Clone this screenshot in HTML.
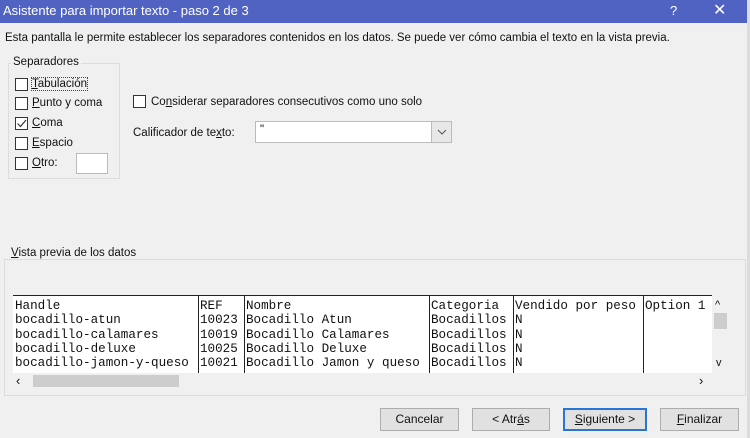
<!DOCTYPE html>
<html><head><meta charset="utf-8"><style>
*{margin:0;padding:0;box-sizing:border-box}
body{width:750px;height:438px;background:#f0f0f0;font-family:"Liberation Sans",sans-serif;font-size:11.5px;color:#111;position:relative;overflow:hidden}
.a{position:absolute;white-space:nowrap}
.title{left:0;top:0;width:747px;height:23px;background:#5063c2;color:#fff;font-size:13px;line-height:22px;padding-left:3px}
.cb{position:absolute;width:13px;height:13px;border:1px solid #333;background:#fff}
.grp{position:absolute;border:1px solid #dcdcdc}
.btn{position:absolute;top:408px;height:23px;border:1px solid #adadad;background:#e1e1e1;text-align:center;line-height:21px;font-size:12px}
.mono{font-family:"Liberation Mono",monospace;font-size:12.6px;line-height:14.3px}
.col{position:absolute;top:0;height:78px;border-left:1px solid #222;padding-left:1px;padding-top:3px}
u{text-decoration:underline}
</style></head><body>
<div class="a title">Asistente para importar texto - paso 2 de 3<span style="position:absolute;left:670px;font-size:13px">?</span><span style="position:absolute;left:713px;font-size:16px">✕</span></div>
<div class="a" style="left:747px;top:0;width:3px;height:438px;background:#dcdcdc"></div>
<div class="a" style="left:5px;top:32px">Esta pantalla le permite establecer los separadores contenidos en los datos. Se puede ver cómo cambia el texto en la vista previa.</div>
<div class="grp" style="left:8px;top:63px;width:112px;height:116px"></div>
<div class="a" style="left:11px;top:56px;background:#f0f0f0;padding:0 2px">Separadores</div>
<div class="cb" style="left:15px;top:78px"></div><div class="a" style="left:32px;top:78px;outline:1px dotted #444"><u>T</u>abulación</div>
<div class="cb" style="left:15px;top:97px"></div><div class="a" style="left:32px;top:97px"><u>P</u>unto y coma</div>
<div class="cb" style="left:15px;top:117px"><svg width="11" height="11" style="position:absolute;left:0;top:0"><path d="M1.5 5.5 L4.5 8.5 L10 2" stroke="#333" fill="none" stroke-width="1.2"/></svg></div><div class="a" style="left:32px;top:117px"><u>C</u>oma</div>
<div class="cb" style="left:15px;top:137px"></div><div class="a" style="left:32px;top:137px"><u>E</u>spacio</div>
<div class="cb" style="left:15px;top:157px"></div><div class="a" style="left:32px;top:157px"><u>O</u>tro:</div>
<div class="a" style="left:76px;top:153px;width:32px;height:21px;background:#fff;border:1px solid #bbb"></div>
<div class="cb" style="left:133px;top:95px"></div><div class="a" style="left:151px;top:96px">Co<u>n</u>siderar separadores consecutivos como uno solo</div>
<div class="a" style="left:133px;top:127px">Calificador de te<u>x</u>to:</div>
<div class="a" style="left:255px;top:121px;width:197px;height:22px;background:#fff;border:1px solid #bbb;padding:2px 4px">"</div>
<div class="a" style="left:431px;top:122px;width:20px;height:20px;background:#e8e8e8;border-left:1px solid #bbb;text-align:center"><svg width="10" height="6" style="margin-top:7px"><path d="M1 1 L5 5 L9 1" stroke="#555" fill="none"/></svg></div>
<div class="grp" style="left:4px;top:259px;width:742px;height:137px"></div>
<div class="a" style="left:9px;top:247px;background:#f0f0f0;padding:0 2px"><u>V</u>ista previa de los datos</div>
<div class="a mono" style="left:13px;top:295px;width:700px;height:78px;background:#fff;overflow:hidden;border-top:1px solid #222">
<div class="col" style="left:0;border:none;padding-left:2px">Handle<br>bocadillo-atun<br>bocadillo-calamares<br>bocadillo-deluxe<br>bocadillo-jamon-y-queso</div>
<div class="col" style="left:185px">REF<br>10023<br>10019<br>10025<br>10021</div>
<div class="col" style="left:231px">Nombre<br>Bocadillo Atun<br>Bocadillo Calamares<br>Bocadillo Deluxe<br>Bocadillo Jamon y queso</div>
<div class="col" style="left:416px">Categoria<br>Bocadillos<br>Bocadillos<br>Bocadillos<br>Bocadillos</div>
<div class="col" style="left:500px">Vendido por peso<br>N<br>N<br>N<br>N</div>
<div class="col" style="left:630px">Option 1</div>
</div>
<div class="a" style="left:712px;top:295px;width:17px;height:78px;background:#f0f0f0"><div class="a" style="left:3px;top:4px;font-size:11px">^</div><div class="a" style="left:2px;top:18px;width:13px;height:16px;background:#cdcdcd"></div><div class="a" style="left:4px;top:62px;font-size:11px">v</div></div>
<div class="a" style="left:13px;top:373px;width:700px;height:16px;background:#f0f0f0"><div class="a" style="left:3px;top:0;font-size:13px">‹</div><div class="a" style="left:20px;top:2px;width:146px;height:12px;background:#cdcdcd"></div><div class="a" style="left:686px;top:0;font-size:13px">›</div></div>
<div class="btn" style="left:380px;width:79px">Cancelar</div>
<div class="btn" style="left:472px;width:78px">&lt; Atr<u>á</u>s</div>
<div class="btn" style="left:563px;width:84px;border:2px solid #2a74d6;line-height:19px"><u>S</u>iguiente &gt;</div>
<div class="btn" style="left:660px;width:79px"><u>F</u>inalizar</div>
</body></html>
